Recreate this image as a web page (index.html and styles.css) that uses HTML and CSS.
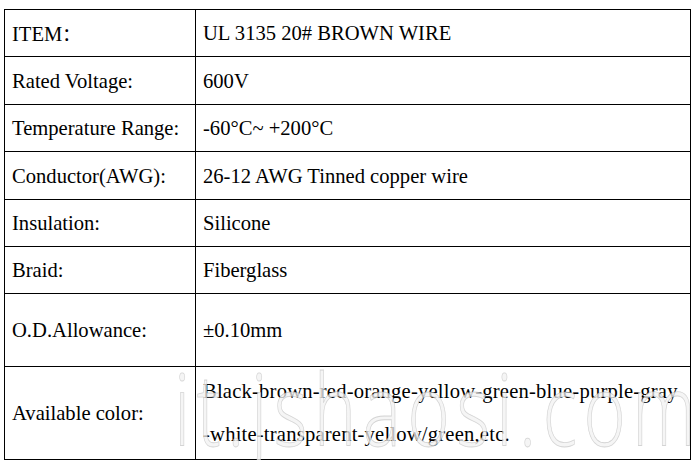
FILE: index.html
```html
<!DOCTYPE html>
<html>
<head>
<meta charset="utf-8">
<link rel="stylesheet" href="styles.css">
</head>
<body>
<div class="wrap">
<table class="spec">
  <colgroup><col class="c1"><col class="c2"></colgroup>
  <tr class="h47"><td>ITEM<span class="cjk">：</span></td><td>UL 3135 20# BROWN WIRE</td></tr>
  <tr class="h48"><td>Rated Voltage:</td><td>600V</td></tr>
  <tr class="h47"><td>Temperature Range:</td><td>-60°C~ +200°C</td></tr>
  <tr class="h48"><td>Conductor(AWG):</td><td>26-12 AWG Tinned copper wire</td></tr>
  <tr class="h47"><td>Insulation:</td><td>Silicone</td></tr>
  <tr class="h47"><td>Braid:</td><td>Fiberglass</td></tr>
  <tr class="h73"><td>O.D.Allowance:</td><td>±0.10mm</td></tr>
  <tr class="h93"><td>Available color:</td><td class="multi">Black-brown-red-orange-yellow-green-blue-purple-gray<br>-white-transparent-yellow/green,etc.</td></tr>
</table>
<div class="watermark">it.jshaosi.com</div>
</div>
</body>
</html>
```
FILE: styles.css
```css
html, body {
  margin: 0;
  padding: 0;
  background: #fff;
  overflow: hidden;
}
body {
  padding: 9px 0 0 4px;
}
.wrap {
  position: relative;
  width: 687px;
}
.spec {
  border-collapse: collapse;
  width: 687px;
  table-layout: fixed;
  color: #000;
}
.c1 { width: 191px; }
.spec td {
  font-family: "Liberation Serif", "Times New Roman", serif;
  font-size: 20.6px;
  border: 1px solid #000;
  padding: 0 0 0 7px;
  vertical-align: middle;
  white-space: nowrap;
  line-height: 24px;
}
.cjk {
  font-family: "Noto Sans CJK SC", sans-serif;
  font-size: 18px;
}
.h47 { height: 47px; }
.h48 { height: 48px; }
.h73 { height: 73px; }
.h93 { height: 93px; }
.spec td.multi {
  line-height: 43px;
  letter-spacing: 0.2px;
}
.watermark {
  position: absolute;
  left: 170px;
  top: 380px;
  font-family: "Open Sans", sans-serif;
  font-weight: 300;
  font-size: 72px;
  line-height: 60px;
  letter-spacing: 6.5px;
  color: rgba(242, 242, 242, 0.75);
  -webkit-text-stroke: 0.6px rgba(175, 175, 175, 0.5);
  transform: scaleY(1.38);
  transform-origin: left bottom;
  white-space: nowrap;
  pointer-events: none;
}
```
